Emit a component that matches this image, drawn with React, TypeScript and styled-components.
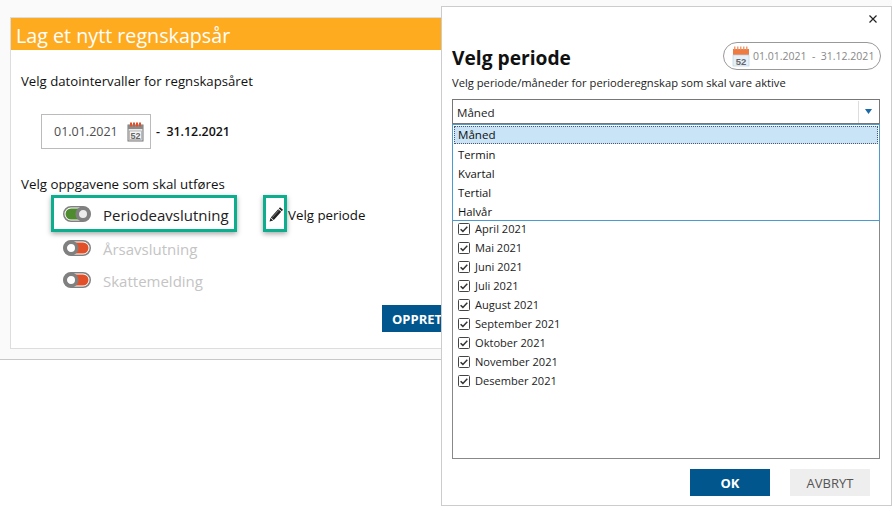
import React from "react";
import styled, { createGlobalStyle } from "styled-components";

const Global = createGlobalStyle`
  html, body { margin: 0; padding: 0; background: #fff; }
  body { font-family: "Open Sans", "Noto Sans", "Liberation Sans", sans-serif; color: #111; }
  #root { width: 892px; height: 511px; overflow: hidden; }
`;
const Page = styled.div`position: relative; width: 892px; height: 511px; overflow: hidden; background: #fff;`;
const Backdrop = styled.div`padding: 17px 0 10px 10px; background: #fafafa; border-bottom: 1px solid #c8c8c8;`;
const Panel = styled.section`height: 332px; box-sizing: border-box; background: #fff; border: 1px solid #ddd; border-right: 0; display: flex; flex-direction: column;`;
const Header = styled.h1`margin: 0; height: 32px; padding-left: 5px; background: #ffab20; color: #fff; font-size: 19.7px; font-weight: 400; line-height: 36px;`;
const Body = styled.div`position: relative; flex: 1; padding: 21px 0 0 10px;`;
const Label = styled.p`margin: 0; font-size: 13.2px; line-height: 20px;`;
const DateRow = styled.div`display: flex; align-items: center; margin: 23px 0 0 20px; height: 35px; font-size: 12.4px;`;
const DateBox = styled.div`box-sizing: border-box; width: 110px; height: 35px; border: 1px solid #bbb; background: #fff; display: flex; align-items: center; padding-left: 12px; gap: 9px; color: #4d4d4d; font-size: 12.5px; font-weight: 500;`;
const ToDate = styled.span`margin-left: 5px; font-weight: 600; color: #111; white-space: pre;`;
const TaskLabel = styled(Label)`margin-top: 25px; font-size: 13.3px;`;
const Tasks = styled.div`margin: 1px 0 0 30px; display: flex; flex-direction: column;`;
const TaskRow = styled.div`display: flex; align-items: center; height: 37px;`;
const Highlight = styled.div`box-sizing: border-box; height: 37px; border: 3px solid #0dae8d; box-shadow: 0 2px 5px rgba(0,0,0,.35); background: #fff; display: flex; align-items: center;`;
const TaskBox = styled(Highlight)`width: 186px; padding-left: 9px;`;
const PencilBox = styled(Highlight)`width: 24px; margin-left: 26px; padding-left: 3px;`;
const PeriodLink = styled.span`margin-left: 1px; padding-top: 3px; font-size: 13.3px;`;
const PlainTask = styled.div<{ $mt: number }>`display: flex; align-items: center; height: 24px; margin-top: ${p => p.$mt}px; padding-left: 12px;`;
const TaskName = styled.span<{ $off?: boolean }>`margin-left: 12px; padding-top: ${p => (p.$off ? "1px" : "3px")}; font-size: 15px; color: ${p => (p.$off ? "#c4c4c4" : "#222")};`;
const Create = styled.button`position: absolute; left: 371px; top: 255px; width: 120px; height: 27px; border: 0; background: #00568d; color: #fff; font: 700 13px "Open Sans", sans-serif; text-align: left; padding-left: 10px;`;

const Dialog = styled.aside`position: absolute; left: 441px; top: 6px; width: 451px; height: 500px; box-sizing: border-box; background: #fff; border: 1px solid #ccc; padding: 0 10px; display: flex; flex-direction: column;`;
const CloseRow = styled.div`height: 16px; display: flex; justify-content: flex-end; align-items: flex-end; padding-right: 4px;`;
const CloseBtn = styled.svg`width: 8px; height: 8px;`;
const TitleRow = styled.div`display: flex; justify-content: space-between; margin-top: 19px; height: 28px;`;
const Title = styled.h2`margin: 0; font-size: 19.2px; line-height: 31px; font-weight: 700; color: #111;`;
const Pill = styled.div`box-sizing: border-box; width: 158px; height: 28px; border: 1px solid #999; border-radius: 14px; display: flex; align-items: center; padding-left: 8px; gap: 3px; color: #888; font-size: 10.5px; white-space: pre;`;
const Sub = styled.p`margin: 5px 0 0; font-size: 11.2px; line-height: 16px; color: #222;`;
const SelectWrap = styled.div`position: relative; margin-top: 8px; width: 428px;`;
const Select = styled.div`box-sizing: border-box; height: 25px; border: 1px solid #777; display: flex; align-items: center; padding: 1px 0 0 4px; font-size: 11.6px; color: #222;`;
const SelectValue = styled.span`flex: 1;`;
const Arrow = styled.span`width: 21px; height: 22px; margin-top: -1px; padding-right: 2px; box-sizing: border-box; border-left: 1px solid #ddd; display: flex; align-items: center; justify-content: center;`;
const Menu = styled.ul`position: absolute; z-index: 2; left: 0; top: 25px; width: 428px; height: 97px; box-sizing: border-box; margin: 0; padding: 1px 0 0; list-style: none; background: #fff; border: 1px solid #4a9bd0; font-size: 11.3px;`;
const MenuItem = styled.li<{ $active?: boolean }>`box-sizing: border-box; height: ${p => (p.$active ? "18px" : "19px")}; line-height: ${p => (p.$active ? "16px" : "20px")}; padding-left: ${p => (p.$active ? "3px" : "4px")}; margin: 0 1px; margin-bottom: ${p => (p.$active ? "1px" : "0")}; ${p => p.$active ? "background: #c8e4f6; border: 1px dotted #556; font-size: 11.6px;" : ""}`;
const Months = styled.div`box-sizing: border-box; height: 335px; width: 428px; border: 1px solid #888; border-top: 0; padding-top: 95px; display: flex; flex-direction: column;`;
const Month = styled.label`height: 19px; display: flex; align-items: center; padding-left: 5px; gap: 5px; font-size: 11.1px; color: #222;`;
const Check = styled.svg`width: 12px; height: 12px; flex: none;`;
const Footer = styled.div`display: flex; justify-content: flex-end; gap: 20px; margin-top: 10px; padding-right: 11px;`;
const Btn = styled.button<{ $primary?: boolean }>`width: 80px; height: 27px; border: 0; background: ${p => (p.$primary ? "#00568d" : "#eee")}; color: ${p => (p.$primary ? "#fff" : "#555")}; font: ${p => (p.$primary ? 700 : 400)} 13px "Open Sans", sans-serif;`;

const CalendarGrey = () => (
  <svg width="17" height="20" viewBox="0 0 17 20">
    <rect x="1" y="3" width="15" height="16" fill="#e8e8e8" stroke="#777" />
    <rect x="1" y="3" width="15" height="4" fill="#8a8a8a" />
    {[3, 6, 9, 12].map(x => <rect key={x} x={x} y="0.5" width="2" height="4" fill="#e2502a" />)}
    <rect x="2.5" y="9" width="12" height="8.5" fill="#f4f4f4" stroke="#999" strokeWidth=".6" />
    <text x="8.5" y="16.5" textAnchor="middle" fontSize="9" fontWeight="700" fontFamily="Liberation Sans, sans-serif" fill="#666">52</text>
  </svg>
);
const CalendarColor = () => (
  <svg width="18" height="22" viewBox="0 0 18 22" style={{ flex: "none" }}>
    <rect x="1" y="4" width="16" height="7" fill="#ee7b42" />
    {[3, 6, 9, 12, 15].map(x => <rect key={x} x={x - 1} y="1.5" width="1.5" height="3" fill="#e9a07a" />)}
    <rect x="1" y="10" width="16" height="11" fill="#e6f0f8" stroke="#bcd3e6" strokeWidth=".7" />
    <text x="9" y="19.5" textAnchor="middle" fontSize="9.5" fontWeight="700" fontFamily="Liberation Sans, sans-serif" fill="#666">52</text>
  </svg>
);
const Toggle = ({ on }: { on?: boolean }) => (
  <svg width="28" height="16" viewBox="0 0 28 16" style={{ flex: "none" }}>
    <rect x="0.75" y="0.75" width="26.5" height="14.5" rx="7.25" fill="#fff" stroke="#808080" strokeWidth="1.5" />
    {on ? (
      <>
        <path d="M8 2.5h8v11H8a5.5 5.5 0 0 1 0-11z" fill="#4e8a2e" />
        <circle cx="20" cy="8" r="5.8" fill="#ececec" stroke="#808080" strokeWidth="3.6" />
      </>
    ) : (
      <>
        <path d="M12 2.5h8a5.5 5.5 0 0 1 0 11h-8z" fill="#e2502a" />
        <circle cx="8" cy="8" r="5.8" fill="#fff" stroke="#808080" strokeWidth="3.6" />
      </>
    )}
  </svg>
);
const Pencil = () => (
  <svg width="15" height="16" viewBox="0 0 15 16">
    <path d="M11 1.2l3 2.6-1.2 1.4-3-2.6zM9.2 3.2l3 2.6-7.4 8.2-3-2.6z" fill="#222" />
    <path d="M1.4 12l2.8 2.4L.6 15.6z" fill="#222" />
    <path d="M3.2 11.6l6.6-7.2" stroke="#aaa" strokeWidth=".7" />
  </svg>
);
const MonthCheck = () => (
  <Check viewBox="0 0 12 12">
    <rect x="0.5" y="0.5" width="11" height="11" rx="1" fill="#fff" stroke="#444" />
    <path d="M2.6 6.2l2.3 2.2 4.4-4.6" fill="none" stroke="#333" strokeWidth="1.5" />
  </Check>
);

const months = ["April", "Mai", "Juni", "Juli", "August", "September", "Oktober", "November", "Desember"];

export default function App() {
  return (
    <Page>
      <Global />
      <Backdrop>
        <Panel>
          <Header>Lag et nytt regnskapsår</Header>
          <Body>
            <Label>Velg datointervaller for regnskapsåret</Label>
            <DateRow>
              <DateBox>01.01.2021<CalendarGrey /></DateBox>
              <ToDate>-  31.12.2021</ToDate>
            </DateRow>
            <TaskLabel>Velg oppgavene som skal utføres</TaskLabel>
            <Tasks>
              <TaskRow>
                <TaskBox><Toggle on /><TaskName>Periodeavslutning</TaskName></TaskBox>
                <PencilBox><Pencil /></PencilBox>
                <PeriodLink>Velg periode</PeriodLink>
              </TaskRow>
              <PlainTask $mt={4}><Toggle /><TaskName $off>Årsavslutning</TaskName></PlainTask>
              <PlainTask $mt={8}><Toggle /><TaskName $off>Skattemelding</TaskName></PlainTask>
            </Tasks>
            <Create>OPPRETT</Create>
          </Body>
        </Panel>
      </Backdrop>
      <Dialog>
        <CloseRow>
          <CloseBtn viewBox="0 0 8 8"><path d="M.5.5l7 7M7.5.5l-7 7" stroke="#222" strokeWidth="1.2" /></CloseBtn>
        </CloseRow>
        <TitleRow>
          <Title>Velg periode</Title>
          <Pill><CalendarColor />01.01.2021  -  31.12.2021</Pill>
        </TitleRow>
        <Sub>Velg periode/måneder for perioderegnskap som skal vare aktive</Sub>
        <SelectWrap>
          <Select>
            <SelectValue>Måned</SelectValue>
            <Arrow>
              <svg width="7" height="5" viewBox="0 0 7 5"><path d="M0 0h7L3.5 5z" fill="#1a6aa8" /></svg>
            </Arrow>
          </Select>
          <Menu>
            <MenuItem $active>Måned</MenuItem>
            <MenuItem>Termin</MenuItem>
            <MenuItem>Kvartal</MenuItem>
            <MenuItem>Tertial</MenuItem>
            <MenuItem>Halvår</MenuItem>
          </Menu>
          <Months>
            {months.map(m => (
              <Month key={m}><MonthCheck />{m} 2021</Month>
            ))}
          </Months>
        </SelectWrap>
        <Footer>
          <Btn $primary>OK</Btn>
          <Btn>AVBRYT</Btn>
        </Footer>
      </Dialog>
    </Page>
  );
}
